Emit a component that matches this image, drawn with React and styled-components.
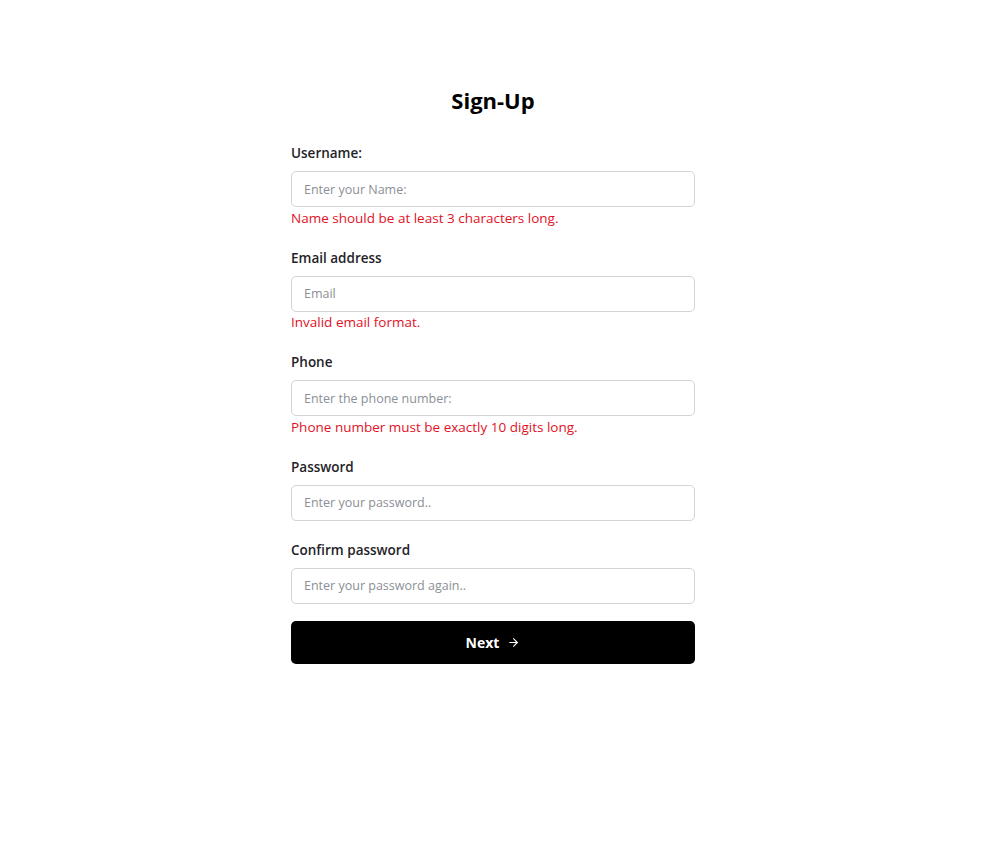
import React, { useState } from "react";
import styled, { createGlobalStyle } from "styled-components";
import { ArrowRight } from "lucide-react";

const GlobalStyle = createGlobalStyle`
  * { box-sizing: border-box; }
  body {
    margin: 0;
    background: #ffffff;
    font-family: "Open Sans", "Noto Sans", sans-serif;
    color: #111827;
  }
`;

const fields = [
  {
    name: "username",
    label: "Username:",
    placeholder: "Enter your Name:",
    type: "text",
    error: "Name should be at least 3 characters long.",
  },
  {
    name: "email",
    label: "Email address",
    placeholder: "Email",
    type: "email",
    error: "Invalid email format.",
  },
  {
    name: "phone",
    label: "Phone",
    placeholder: "Enter the phone number:",
    type: "tel",
    error: "Phone number must be exactly 10 digits long.",
  },
  {
    name: "password",
    label: "Password",
    placeholder: "Enter your password..",
    type: "password",
  },
  {
    name: "confirm",
    label: "Confirm password",
    placeholder: "Enter your password again..",
    type: "password",
  },
];

export default function App() {
  const [values, setValues] = useState({});

  const onChange = (e) => {
    setValues({ ...values, [e.target.name]: e.target.value });
  };

  const onSubmit = (e) => {
    e.preventDefault();
  };

  return (
    <Page>
      <GlobalStyle />
      <Form onSubmit={onSubmit}>
        <Title>Sign-Up</Title>
        {fields.map((f) => (
          <Group key={f.name} $hasError={!!f.error}>
            <Label htmlFor={f.name}>{f.label}</Label>
            <Input
              id={f.name}
              name={f.name}
              type={f.type}
              placeholder={f.placeholder}
              value={values[f.name] || ""}
              onChange={onChange}
            />
            {f.error && <Error>{f.error}</Error>}
          </Group>
        ))}
        <Button type="submit">
          Next <ArrowRight size={13} strokeWidth={2} />
        </Button>
      </Form>
    </Page>
  );
}

const Page = styled.div`
  min-height: 100vh;
  width: 100%;
  display: flex;
  justify-content: center;
  padding: 85px 11px 0 0;
`;

const Form = styled.form`
  width: 404px;
  display: flex;
  flex-direction: column;
`;

const Title = styled.h2`
  margin: 0 0 28px 0;
  text-align: center;
  font-size: 22px;
  line-height: 30px;
  font-weight: 700;
  color: #000;
`;

const Group = styled.div`
  display: flex;
  flex-direction: column;
  margin-bottom: ${(p) => (p.$hasError ? 20 : 19)}px;
`;

const Label = styled.label`
  font-size: 13.5px;
  line-height: 20px;
  font-weight: 600;
  color: #1f2328;
  margin-bottom: 8px;
`;

const Input = styled.input`
  width: 100%;
  height: 36px;
  padding: 0 12px;
  border: 1px solid #d4d4d8;
  border-radius: 5px;
  font-family: inherit;
  font-size: 12.5px;
  color: #111;
  outline: none;

  &::placeholder {
    color: #8b8f96;
  }
`;

const Error = styled.div`
  margin-top: 0.5px;
  font-size: 13.5px;
  line-height: 20px;
  color: #e0121f;
`;

const Button = styled.button`
  margin-top: -1.5px;
  width: 100%;
  height: 43px;
  display: flex;
  justify-content: center;
  align-items: center;
  gap: 8px;
  background: #000;
  color: #fff;
  border: none;
  border-radius: 5px;
  font-family: inherit;
  font-size: 14px;
  font-weight: 700;
  cursor: pointer;
`;
